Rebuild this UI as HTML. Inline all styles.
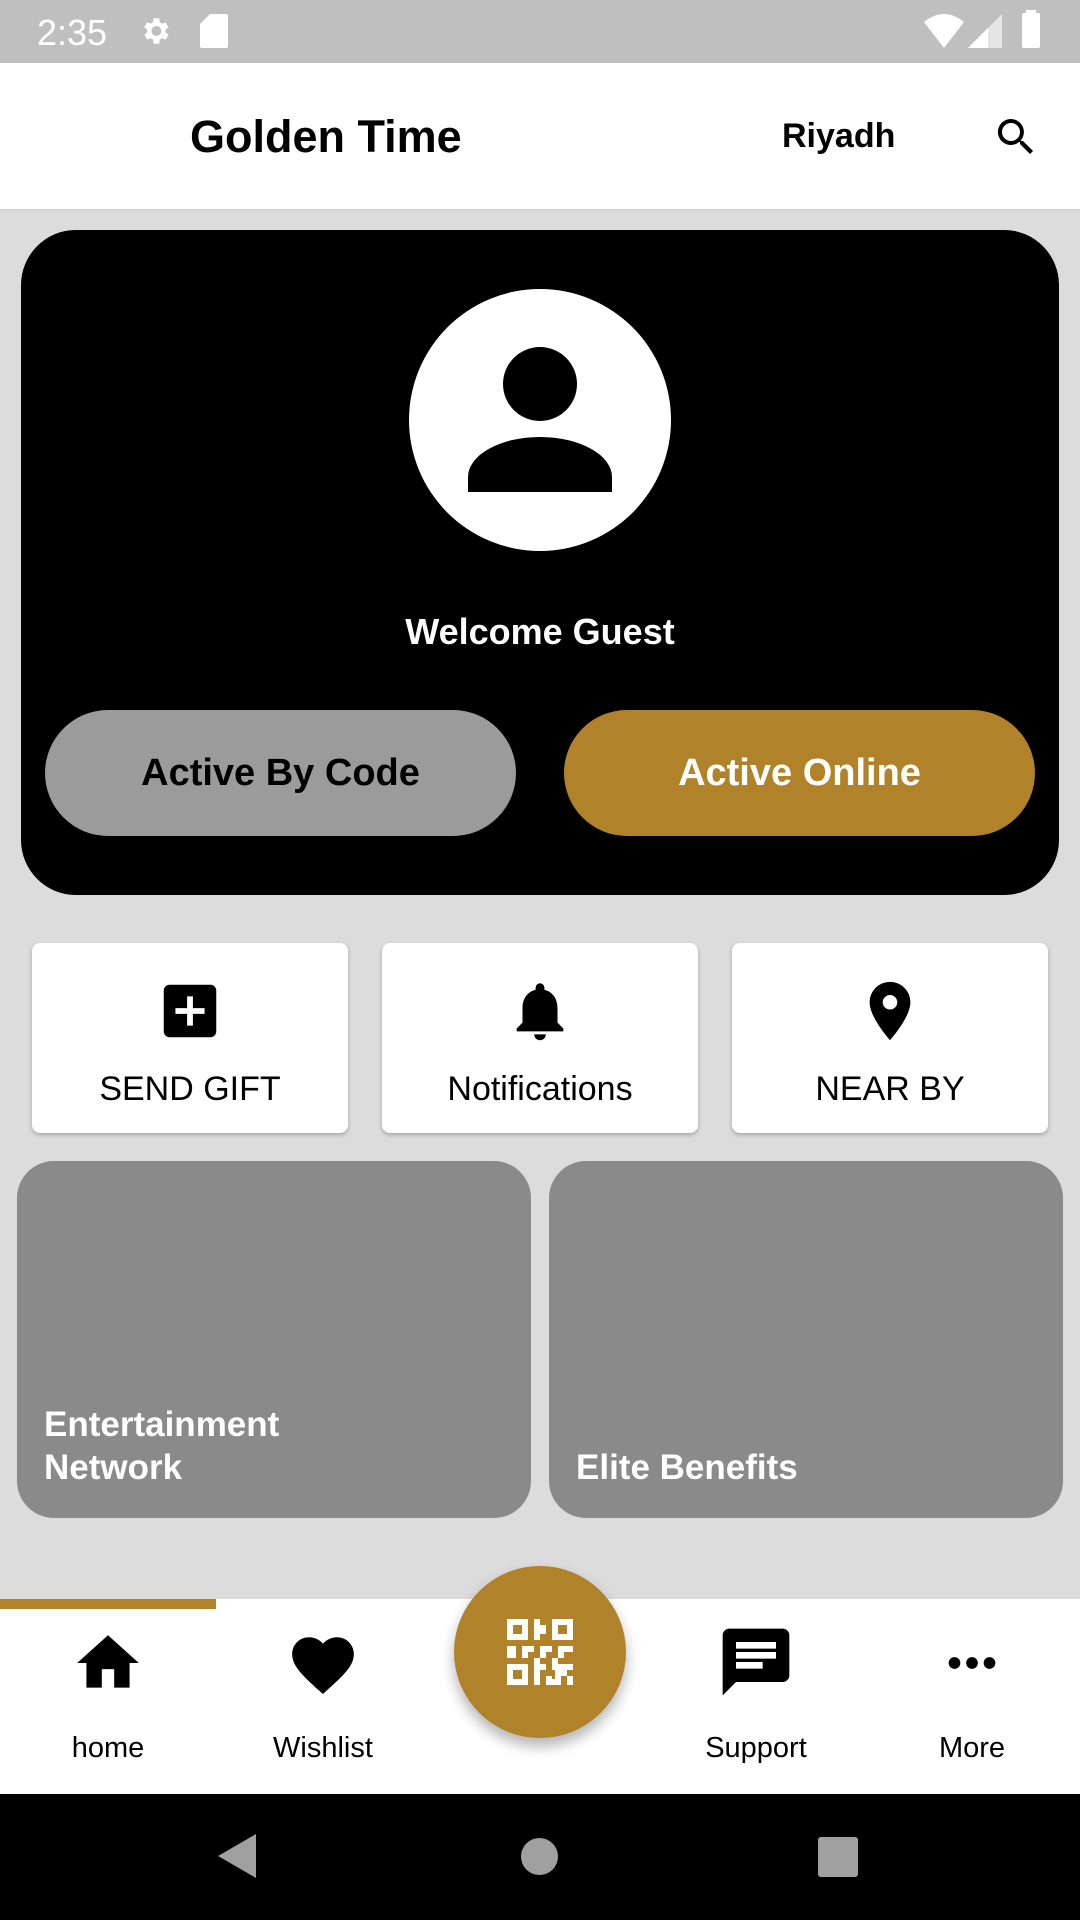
<!DOCTYPE html>
<html><head><meta charset="utf-8"><style>
*{margin:0;padding:0;box-sizing:border-box}
body{width:1080px;height:1920px;background:#dcdcdc;font-family:"Liberation Sans",sans-serif;position:relative;overflow:hidden}
.a{position:absolute}
.btn{position:absolute;top:710px;height:126px;width:471px;border-radius:63px;display:flex;align-items:center;justify-content:center;font-weight:bold;font-size:38px}
.tile{position:absolute;top:943px;width:316px;height:190px;background:#fff;border-radius:8px;box-shadow:0 2px 4px rgba(0,0,0,.25);text-align:center}
.tile span{position:absolute;left:0;right:0;top:127px;font-size:34px;color:#000}
.tile svg{position:absolute;left:123px;top:33px}
.card{position:absolute;top:1161px;width:514px;height:357px;background:#8a8a8a;border-radius:37px;color:#fff;font-weight:bold;font-size:35px;line-height:43px}
.nl{position:absolute;top:1732px;font-size:29px;width:200px;text-align:center;color:#000}
</style></head><body>
<div class="a" style="left:0;top:0;width:1080px;height:63px;background:#bfbfbf"></div>
<div class="a" style="left:37px;top:12px;color:#fff;font-size:36px">2:35</div>
<svg class="a" style="left:138px;top:14px" width="34" height="34" viewBox="0 0 24 24"><path fill="#fff" d="M19.4 13a7.5 7.5 0 000-2l2.1-1.6-2-3.5-2.5 1a7 7 0 00-1.7-1L15 3h-4l-.4 2.9a7 7 0 00-1.7 1l-2.5-1-2 3.5L6.6 11a7.5 7.5 0 000 2l-2.1 1.6 2 3.5 2.5-1a7 7 0 001.7 1L11 21h4l.4-2.9a7 7 0 001.7-1l2.5 1 2-3.5zM13 15.5a3.5 3.5 0 110-7 3.5 3.5 0 010 7z"/></svg>
<svg class="a" style="left:200px;top:14px" width="28" height="34" viewBox="0 0 14 17"><path fill="#fff" d="M5 0h8a1 1 0 011 1v15a1 1 0 01-1 1H1a1 1 0 01-1-1V5z"/></svg>
<svg class="a" style="left:924px;top:14px" width="40" height="34" viewBox="0 0 20 17"><path fill="#fff" d="M0 4Q10-4 20 4L10 17z"/></svg>
<svg class="a" style="left:968px;top:14px" width="34" height="34" viewBox="0 0 17 17"><path fill="#fff" opacity=".6" d="M17 0v17H0z"/><path fill="#fff" d="M10 7v10H0L10 7z"/></svg>
<div class="a" style="left:1022px;top:13px;width:18px;height:35px;background:#fff;border-radius:2px"></div>
<div class="a" style="left:1026px;top:10px;width:10px;height:4px;background:#fff"></div>

<div class="a" style="left:0;top:63px;width:1080px;height:147px;background:#fff;border-bottom:1px solid #cfcfcf"></div>
<div class="a" style="left:190px;top:111px;font-size:45px;font-weight:bold">Golden Time</div>
<div class="a" style="left:782px;top:117px;font-size:34px;font-weight:bold">Riyadh</div>
<svg class="a" style="left:992px;top:113px" width="48" height="48" viewBox="0 0 24 24"><path d="M15.5 14h-.8l-.3-.3A6.5 6.5 0 109.5 16a6.5 6.5 0 004.2-1.6l.3.3v.8l5 5 1.5-1.5-5-5zm-6 0A4.5 4.5 0 1114 9.5 4.5 4.5 0 019.5 14z"/></svg>

<div class="a" style="left:21px;top:230px;width:1038px;height:665px;background:#000;border-radius:55px"></div>
<div class="a" style="left:409px;top:289px;width:262px;height:262px;background:#fff;border-radius:50%"></div>
<div class="a" style="left:503px;top:347px;width:74px;height:74px;background:#000;border-radius:50%"></div>
<div class="a" style="left:468px;top:437px;width:144px;height:55px;background:#000;border-radius:72px 72px 0 0/40px 40px 0 0"></div>
<div class="a" style="left:0;width:1080px;top:611px;text-align:center;color:#fff;font-weight:bold;font-size:36px">Welcome Guest</div>
<div class="btn" style="left:45px;background:#9b9b9b;color:#000">Active By Code</div>
<div class="btn" style="left:564px;background:#b0832a;color:#fff">Active Online</div>

<div class="tile" style="left:32px"><svg width="70" height="70" viewBox="0 0 24 24"><path d="M19 3H5a2 2 0 00-2 2v14a2 2 0 002 2h14a2 2 0 002-2V5a2 2 0 00-2-2zm-2 10h-4v4h-2v-4H7v-2h4V7h2v4h4z"/></svg><span>SEND GIFT</span></div>
<div class="tile" style="left:382px"><svg width="70" height="70" viewBox="0 0 24 24"><path d="M12 22a2 2 0 002-2h-4a2 2 0 002 2zm6-6v-5c0-3.1-1.6-5.6-4.5-6.3V4a1.5 1.5 0 00-3 0v.7C7.6 5.4 6 7.9 6 11v5l-2 2v1h16v-1z"/></svg><span>Notifications</span></div>
<div class="tile" style="left:732px"><svg width="70" height="70" viewBox="0 0 24 24"><path d="M12 2a7 7 0 00-7 7c0 5.2 7 13 7 13s7-7.8 7-13a7 7 0 00-7-7zm0 9.5A2.5 2.5 0 1112 6.5a2.5 2.5 0 010 5z"/></svg><span>NEAR BY</span></div>

<div class="card" style="left:17px"><div class="a" style="left:27px;top:242px">Entertainment<br>Network</div></div>
<div class="card" style="left:549px"><div class="a" style="left:27px;top:285px">Elite Benefits</div></div>

<div class="a" style="left:0;top:1599px;width:1080px;height:195px;background:#fff"></div>
<div class="a" style="left:0;top:1599px;width:216px;height:10px;background:#b0832a"></div>
<svg class="a" style="left:71px;top:1626px" width="74" height="74" viewBox="0 0 24 24"><path d="M10 20v-6h4v6h5v-8h3L12 3 2 12h3v8z"/></svg>
<svg class="a" style="left:286px;top:1628px" width="74" height="74" viewBox="0 0 24 24"><path d="M12 21.4l-1.5-1.3C5.4 15.4 2 12.3 2 8.5 2 5.4 4.4 3 7.5 3c1.7 0 3.4.8 4.5 2.1C13.1 3.8 14.8 3 16.5 3 19.6 3 22 5.4 22 8.5c0 3.8-3.4 6.9-8.5 11.5z"/></svg>
<svg class="a" style="left:716px;top:1622px" width="80" height="80" viewBox="0 0 24 24"><path d="M20 2H4a2 2 0 00-2 2v18l4-4h14a2 2 0 002-2V4a2 2 0 00-2-2zM6 9h12v2H6zm8 5H6v-2h8zm4-6H6V6h12z"/></svg>
<svg class="a" style="left:937px;top:1628px" width="70" height="70" viewBox="0 0 24 24"><circle cx="6" cy="12" r="2"/><circle cx="12" cy="12" r="2"/><circle cx="18" cy="12" r="2"/></svg>
<div class="nl" style="left:8px">home</div>
<div class="nl" style="left:223px">Wishlist</div>
<div class="nl" style="left:656px">Support</div>
<div class="nl" style="left:872px">More</div>
<div class="a" style="left:454px;top:1566px;width:172px;height:172px;border-radius:50%;background:#b0832a;box-shadow:0 8px 14px rgba(0,0,0,.3)"></div>
<svg class="a" style="left:507px;top:1619px" width="66" height="66" viewBox="0 0 22 22" fill="#fff"><path d="M0 0h7v7H0zm2 2v3h3V2zM15 0h7v7h-7zm2 2v3h3V2zM0 15h7v7H0zm2 2v3h3v-3zM9 0h2v2h2v3h-2v2H9zM0 9h3v2h2V9h4v2h-2v2H5v-2H3v2H0zM11 9h4v2h-2v2h-2zM17 9h5v2h-3v2h-2zM9 13h2v2h2v2h-2v5H9zM15 13h2v2h5v2h-2v2h2v3h-2v-3h-2v3h-3v-2h1v-3h-1zM13 19h2v3h-2z"/></svg>

<div class="a" style="left:0;top:1794px;width:1080px;height:126px;background:#000"></div>
<svg class="a" style="left:218px;top:1834px" width="40" height="44" viewBox="0 0 20 22"><path fill="#a0a0a0" d="M19 0v22L0 11z"/></svg>
<div class="a" style="left:521px;top:1838px;width:37px;height:37px;border-radius:50%;background:#a0a0a0"></div>
<div class="a" style="left:818px;top:1837px;width:40px;height:40px;border-radius:3px;background:#a0a0a0"></div>
</body></html>
